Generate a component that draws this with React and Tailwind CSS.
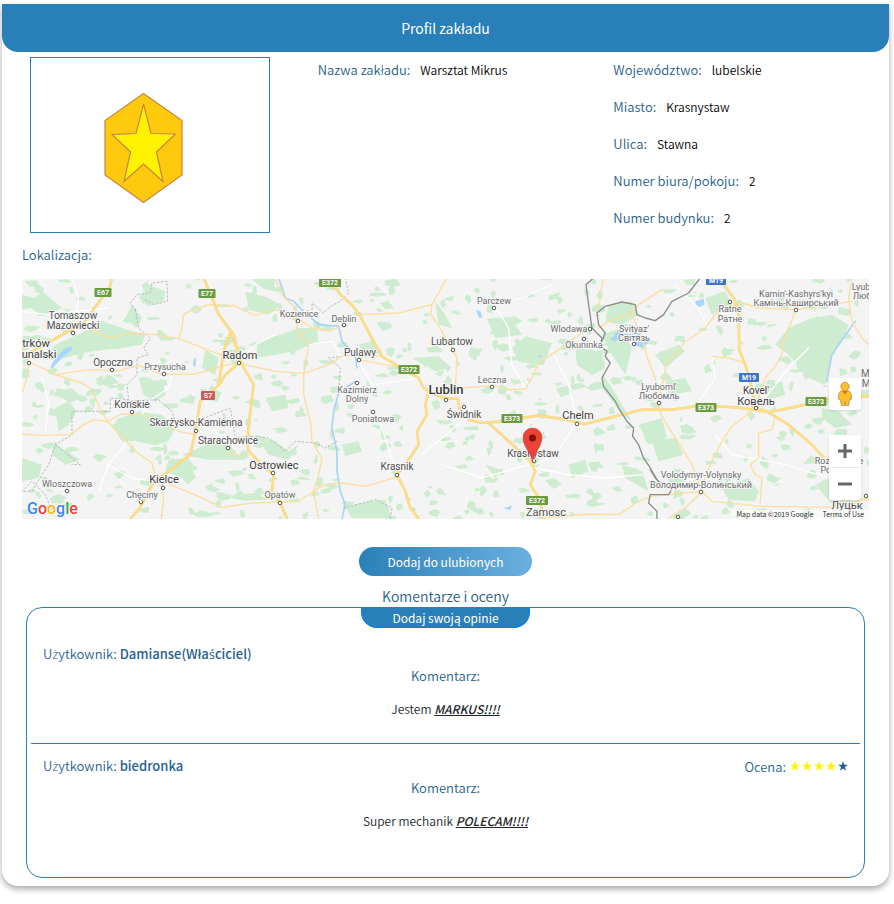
import React from "react";

/* Map geometry is drawn in units of a third of a pixel, see the scaled group in MapDrawing. */
const FORESTS = [
  "190,160 240,130 330,160 370,170 360,200 300,210 250,215 180,225 130,240 70,245 100,200",
  "270,440 310,415 350,402 420,410 460,450 440,490 400,502 340,490 300,490",
  "350,300 420,310 432,350 400,372 365,350",
  "530,510 600,480 640,520 655,545 560,545 480,530",
  "440,545 500,540 522,575 470,598 430,580",
  "0,50 40,60 60,40 120,90 70,115 30,90 0,95",
  "100,390 140,370 165,400 140,440 110,460",
  "95,490 130,520 175,545 130,560 90,530",
  "100,340 150,330 180,360 140,375",
  "380,20 430,40 425,70 380,85 350,60",
  "330,80 360,120 345,150 310,120",
  "0,540 60,560 50,600 0,610",
  "550,215 590,240 580,290 540,270",
  "710,190 790,165 830,150 885,150 890,190 820,220 760,230 700,240",
  "670,40 740,60 775,80 740,110 680,95",
  "690,3 760,3 755,40 720,30",
  "700,470 760,490 800,520 830,500 800,545 740,530",
  "730,360 790,350 800,390 750,400",
  "1010,200 1050,190 1080,220 1030,240",
  "630,650 700,645 740,665 660,668",
  "970,690 1040,670 1090,665 1110,720 990,720",
  "1240,70 1270,110 1290,150 1250,140",
  "1470,210 1510,175 1590,195 1565,262 1490,252",
  "1395,122 1465,117 1500,170 1420,180",
  "1660,210 1740,220 1750,270 1710,292 1665,260",
  "1740,285 1770,330 1800,380 1830,430 1800,410 1745,335",
  "1740,170 1800,150 1830,210 1810,290 1770,230",
  "1760,80 1830,70 1850,110 1800,140 1750,130",
  "1850,440 1920,420 1935,480 1880,500",
  "1800,560 1860,580 1880,640 1810,600",
  "2300,150 2370,120 2430,110 2480,140 2460,190 2430,230 2410,320 2360,300 2300,230 2260,200",
  "2220,330 2280,310 2290,350 2240,365",
  "1900,230 1970,200 1990,220 1930,270",
  "2050,60 2110,40 2130,80 2070,110",
  "1890,490 1960,480 1985,530 1910,550",
  "2100,630 2180,600 2210,640 2200,670 2120,665",
  "2400,390 2450,400 2490,440 2440,450 2400,420",
  "2440,590 2500,680 2440,690 2380,620",
  "1390,560 1440,575 1420,600",
  "1640,560 1690,545 1700,580 1650,600",
  "960,500 1010,490 1020,520 970,535",
  "2270,190 2320,170 2330,220 2280,215",
  "1930,310 1990,300 2010,340 1940,350",
  "1170,240 1250,235 1290,270 1240,280",
];

const THICK_ROADS = [
  "270,0 262,30 225,80 185,135 130,165 60,205 20,225 0,238",
  "545,0 570,60 590,110 635,170 650,230 655,250",
  "625,165 605,220 595,290 590,320 560,350 535,370 525,430 518,470 505,530 440,580 395,610 375,650 350,695 325,722",
  "657,250 610,290 590,320",
  "925,10 960,55 990,80 1015,115 1055,190 1080,235 1130,265 1190,300 1205,330 1240,350 1270,360",
  "630,170 650,230 660,260 695,320 685,400 675,490 680,520 730,570 755,590 750,640 775,675 795,722",
  "1220,340 1210,380 1215,410 1185,460 1190,500 1160,545 1125,590 1150,640 1165,690 1190,722",
  "1260,360 1308,362 1312,390 1340,425 1380,435 1440,430 1550,412 1630,425 1690,438 1740,425 1810,408 1860,395 1950,395 2020,385 2090,385 2140,388 2200,396 2240,402 2280,395 2350,380 2420,362 2541,355",
  "1400,435 1450,480 1525,550 1540,580 1525,620 1555,665 1562,722",
  "2190,385 2235,400 2300,440 2370,500 2420,555 2480,620",
  "2090,0 2135,60 2150,100 2152,215 2170,260 2185,310 2202,385",
];

const THIN_ROADS = [
  "200,155 260,178 340,165 400,170 470,182 600,232 650,240",
  "20,252 60,270 100,290 180,315 210,335 235,395 260,435 300,475 340,520 390,555 400,600",
  "100,290 200,275 290,278 350,262 420,290 520,288 600,265 655,250",
  "0,210 20,252 15,300 0,345",
  "0,468 60,472 145,470 185,440 215,425 255,430 300,408 370,412 430,435 470,460 520,470",
  "630,85 560,80 500,100 485,110 480,150 470,182",
  "420,620 425,660 418,722",
  "430,615 480,635 530,655 600,688 690,675 775,672 830,670 875,640 905,620 960,615 1030,625 1125,597",
  "617,505 625,530 680,533",
  "760,0 780,50 815,85 825,150 860,200 845,290 845,350 865,430 870,490 900,540 890,590 875,640 890,722",
  "630,80 700,112 760,95 810,110 870,150 920,160 950,148",
  "1015,110 1130,105 1230,80 1275,0",
  "1230,80 1227,110 1260,160 1285,205 1305,240 1300,330",
  "655,257 690,265 760,280 845,287 920,260 960,235 1020,230 1080,235",
  "1010,245 1130,268",
  "1240,350 1320,330 1380,325 1420,323 1460,335 1510,333 1535,290 1550,255 1610,215 1700,150",
  "1562,720 1700,708 1790,710 1850,670 1890,655 2040,640 2070,670 2220,685 2440,688 2541,660",
  "1745,0 1725,100",
  "1730,150 1760,130 1820,110 1850,80 1920,35",
  "1830,110 1860,180 1880,250 1900,300 1912,390",
  "2202,385 2230,300 2260,265 2280,230 2285,190 2320,100",
  "1910,375 1925,300 1935,250 1970,220 1985,195 2050,150 2080,110 2125,85 2160,75 2210,90 2320,95 2400,85 2490,70",
  "2490,0 2480,60 2490,130 2520,180 2541,200",
  "1910,395 1940,450 1980,510 2010,560 2040,640",
  "2190,400 2130,445 2100,490 2055,580 2040,635",
  "2260,415 2250,455 2210,465 2210,540 2185,560 2200,590 2220,600 2215,675",
  "2040,640 1990,690 1940,722",
  "2070,235 2120,240 2160,252",
  "2420,690 2480,660 2541,665",
];

const LOCAL_ROADS = [
  "150,0 170,60 160,110",
  "0,100 80,110 160,100 260,90",
  "60,300 80,370 70,460",
  "360,410 380,370 440,330 450,290",
  "255,560 330,600 400,610",
  "230,640 260,560 310,500",
  "655,250 700,200 760,170",
  "860,200 930,190 960,240",
  "1010,250 1050,320 1125,310 1190,300",
  "1053,400 1080,450 1125,590",
  "1200,530 1260,480 1320,430",
  "1417,80 1460,150 1470,260 1510,330",
  "1417,80 1500,60 1590,20",
  "1540,560 1600,530 1660,440",
  "1540,570 1640,590 1750,600 1860,590",
  "1260,560 1380,600 1520,560",
  "1590,220 1640,320 1665,435",
  "2070,235 2080,300 2020,385",
  "2080,470 2130,530 2290,560 2420,600",
  "1960,20 2030,90 2060,150",
  "2360,210 2300,270 2210,385",
];

const RIVERS = [
  "770,0 790,60 815,70 845,100 890,140 950,145 960,190 1000,230 1005,270",
  "1000,310 950,345 935,400 930,450 945,520 945,580 955,640 970,680 960,722",
  "2500,130 2450,200 2430,230 2420,280 2415,310",
];

const LAKES = [
  "85,268 100,240 130,210 152,205 150,215 125,235 92,270",
  "1362,95 1375,100 1382,120 1370,118",
  "1765,185 1790,155 1802,170 1780,190",
  "1830,200 1850,160 1865,180 1880,195 1860,208",
  "1790,170 1830,165 1855,180 1820,190",
  "2020,70 2045,62 2048,80 2025,90",
  "1445,690 1470,683 1465,697",
  "515,245 523,240 520,268 513,262",
  "1545,235 1562,230 1555,240",
  "660,575 675,567 668,578",
];

const COUNTRY_BORDERS = [
  "1715,0 1692,20 1700,80 1710,150 1740,180 1735,205 1755,220 1750,235 1765,255 1740,300 1745,325 1780,370 1790,390 1815,430 1835,450 1832,475 1850,500 1865,540 1885,570 1905,605 1920,620",
  "1740,190 1750,165 1730,140 1725,105 1750,85 1800,72 1840,80 1845,110 1870,120 1900,128 1925,110 1950,70 2000,45 2035,0",
  "1885,575 1900,600 1930,630 1955,625 1940,650 1885,650 1880,675 1905,700 1905,722",
];

const REGION_BORDERS = [
  "340,95 325,75 345,50 385,45 390,15 435,10 437,70 395,80 370,65",
  "340,95 350,150 385,180 365,210 380,230 345,240 345,290 315,320 320,365 265,360 265,400 150,400 150,470 100,500 80,560 60,590 30,640 0,640",
  "315,370 410,365 450,400 460,430 520,430 625,390 640,480",
  "640,480 700,475 740,480 790,520 820,490 880,495 910,510 945,490",
  "970,0 980,45 955,70 925,85 905,105 870,75 870,95",
  "960,235 920,240 955,270 950,330",
  "100,500 175,560 150,560",
  "965,690 1060,665 1110,690 1105,722",
  "0,640 30,610 70,650 90,700",
];

function scatter(count) {
  let seed = 41;
  const next = () => {
    seed = (seed * 16807) % 2147483647;
    return seed / 2147483647;
  };
  return Array.from({ length: count }, () => {
    const cx = next() * 2541;
    const cy = next() * 722;
    const rx = 7 + next() * 20;
    const ry = 5 + next() * 13;
    const corners = 4 + Math.floor(next() * 4);
    return Array.from({ length: corners }, (_, i) => {
      const a = (i / corners) * Math.PI * 2 + next() * 0.8;
      const r = 0.5 + next() * 0.7;
      return `${Math.round(cx + Math.cos(a) * rx * r)},${Math.round(cy + Math.sin(a) * ry * r)}`;
    }).join(" ");
  });
}

const GROVES = scatter(560);

/* [text, centre x, baseline y, size, tone] */
const LABELS = [
  ["Tomaszow", 51, 40, 10, "b"],
  ["Mazowiecki", 51, 50, 10, "b"],
  ["trków", 14, 68, 11, "a"],
  ["unalski", 17, 79, 11, "a"],
  ["Opoczno", 91, 87, 10, "b"],
  ["Przysucha", 143, 91, 9, "c"],
  ["Konskie", 110, 129, 10, "b"],
  ["Skarżysko-Kamienna", 174, 147, 10, "b"],
  ["Starachowice", 206, 165, 10, "b"],
  ["Kielce", 142, 204, 11, "a"],
  ["Chęciny", 120, 219, 9, "c"],
  ["Wloszczowa", 45, 208, 9, "c"],
  ["Radom", 218, 80, 11, "a"],
  ["Kozienice", 277, 38, 9, "c"],
  ["Deblin", 322, 43, 9, "c"],
  ["Pulawy", 338, 77, 10, "b"],
  ["Kazimierz", 335, 114, 9, "c"],
  ["Dolny", 335, 123, 9, "c"],
  ["Poniatowa", 351, 143, 9, "c"],
  ["Ostrowiec", 252, 190, 11, "a"],
  ["Opatów", 258, 219, 9, "c"],
  ["Krasnik", 375, 191, 10, "b"],
  ["Lubartow", 430, 66, 10, "b"],
  ["Lublin", 424, 115, 13, "a"],
  ["Świdnik", 442, 139, 10, "b"],
  ["Leczna", 470, 104, 9, "c"],
  ["Parczew", 472, 25, 9, "c"],
  ["Wlodawa", 547, 53, 9, "c"],
  ["Okuninka", 562, 69, 9, "c"],
  ["Svityaz'", 612, 53, 9, "c"],
  ["Світязь", 612, 62, 9, "c"],
  ["Chelm", 556, 140, 11, "a"],
  ["Krasnystaw", 511, 178, 10, "b"],
  ["Zamosc", 524, 237, 11, "b"],
  ["Lyuboml'", 637, 111, 9, "c"],
  ["Любомль", 637, 120, 9, "c"],
  ["Ratne", 708, 33, 9, "c"],
  ["Ратне", 708, 43, 9, "c"],
  ["Kamin'-Kashyrs'kyi", 774, 18, 9, "c"],
  ["Камінь-Каширський", 774, 27, 9, "c"],
  ["Lyub", 839, 11, 9, "c"],
  ["Люб", 840, 20, 9, "c"],
  ["Kovel'", 734, 115, 10, "a"],
  ["Ковель", 734, 126, 11, "a"],
  ["Ma", 846, 98, 10, "c"],
  ["M", 844, 108, 10, "c"],
  ["Volodymyr-Volynsky", 679, 199, 9, "c"],
  ["Володимир-Волинський", 679, 209, 9, "c"],
  ["Rozhyshche", 817, 185, 9, "c"],
  ["Рожище", 816, 194, 9, "c"],
  ["Луцьк", 825, 230, 11, "b"],
];

const TOWNS = [
  [51, 54], [7, 84], [90, 91], [142, 95], [110, 133], [174, 152], [206, 169], [141, 209],
  [119, 223], [45, 212], [217, 84], [276, 42], [322, 46], [337, 81], [335, 104], [351, 133],
  [251, 194], [258, 224], [375, 196], [431, 71], [424, 121], [442, 128], [470, 108], [472, 29],
  [568, 50], [562, 60], [612, 65], [555, 145], [512, 182], [637, 124], [708, 23], [774, 31],
  [734, 129], [679, 213], [844, 217], [656, 238],
];

const SHIELDS = [
  ["E67", 81, 13, 17, "#6a9b3f"],
  ["E77", 185, 14, 17, "#6a9b3f"],
  ["S7", 186, 116, 14, "#cd5c5c"],
  ["E372", 308, 3, 22, "#6a9b3f"],
  ["E372", 387, 90, 21, "#6a9b3f"],
  ["E373", 490, 139, 21, "#6a9b3f"],
  ["E372", 515, 221, 22, "#6a9b3f"],
  ["M19", 694, 1, 20, "#3f74c9"],
  ["M19", 727, 98, 20, "#3f74c9"],
  ["E373", 684, 128, 21, "#6a9b3f"],
  ["E373", 794, 122, 21, "#6a9b3f"],
];

const TONES = { a: "#3c3c3c", b: "#4f4f4f", c: "#6b6b6b" };

function Lines({ items, color, width, dash }) {
  return (
    <g fill="none" stroke={color} strokeWidth={width} strokeDasharray={dash} strokeLinejoin="round" strokeLinecap="round">
      {items.map((points, i) => (
        <polyline key={i} points={points} />
      ))}
    </g>
  );
}

function MapDrawing() {
  return (
    <svg
      className="block h-full w-full bg-[#f4f4f4] font-['Roboto',sans-serif]"
      viewBox="0 0 847 240"
      preserveAspectRatio="xMidYMid slice"
      role="img"
      aria-label="Mapa"
    >
      <g transform="translate(0 -1) scale(0.3333)">
        <g fill="#ceecd0">
          {FORESTS.map((p, i) => <polygon key={i} points={p} />)}
          {GROVES.map((p, i) => <polygon key={i} points={p} />)}
        </g>
        <g fill="#a9d6fb">
          {LAKES.map((p, i) => <polygon key={i} points={p} />)}
        </g>
        <Lines items={LOCAL_ROADS} color="#ffffff" width={4} />
        <Lines items={RIVERS} color="#a9d3f8" width={5} />
        <Lines items={REGION_BORDERS} color="#b9b9be" width={3} dash="5 7" />
        <Lines items={THIN_ROADS} color="#fbdf9d" width={4} />
        <Lines items={THICK_ROADS} color="#f9d27a" width={8} />
        <Lines items={THICK_ROADS} color="#fde08c" width={5} />
        <Lines items={COUNTRY_BORDERS} color="#8d8d8d" width={4} />
      </g>
      <g fill="#ffffff" stroke="#555555" strokeWidth="1">
        {TOWNS.map(([x, y], i) => <circle key={i} cx={x} cy={y} r="1.8" />)}
      </g>
      {SHIELDS.map(([text, x, y, w, fill], i) => (
        <g key={i}>
          <rect x={x - w / 2} y={y - 4} width={w} height="9" rx="1" fill={fill} />
          <text x={x} y={y + 3} textAnchor="middle" fontSize="7" fontWeight="700" fill="#ffffff">{text}</text>
        </g>
      ))}
      <g textAnchor="middle" stroke="#f7f7f7" strokeWidth="2" strokeLinejoin="round" paintOrder="stroke">
        {LABELS.map(([text, x, y, size, tone], i) => (
          <text key={i} x={x} y={y} fontSize={size} fontWeight={size > 12 ? 500 : 400} fill={TONES[tone]}>{text}</text>
        ))}
      </g>
      <path d="M510.500 183c-1-9-9.500-15-9.500-24.500a9.500 9.500 0 0 1 19 0c0 9.500-8.500 15.500-9.500 24.500z" fill="#ea4335" stroke="#c9372b" strokeWidth="0.500" />
      <circle cx="510.500" cy="159" r="3.500" fill="#7d120d" />
    </svg>
  );
}

function Pegman() {
  return (
    <svg viewBox="0 0 16 26" className="h-[26px] w-4" aria-hidden="true">
      <path d="M4 10C2.500 10.500 2 12 1.800 14L1.300 18l2.200.8.800 5.700h3l.7-4 .7 4h3l.8-5.700 2.200-.8-.5-4c-.2-2-.7-3.500-2.200-4z" fill="#fcbf2c" stroke="#b98a45" strokeWidth="0.800" />
      <path d="M5 9.800h6l-3 4z" fill="#e3742b" />
      <circle cx="8" cy="5.500" r="4.200" fill="#fcbf2c" stroke="#b98a45" strokeWidth="0.800" />
    </svg>
  );
}

function GoogleMark() {
  return (
    <span className="text-[16px] leading-5 font-medium font-['Roboto',sans-serif] [text-shadow:0_0_2px_#fff]">
      <span className="text-[#4285f4]">G</span>
      <span className="text-[#ea4335]">o</span>
      <span className="text-[#fbbc05]">o</span>
      <span className="text-[#4285f4]">g</span>
      <span className="text-[#34a853]">l</span>
      <span className="text-[#ea4335]">e</span>
    </span>
  );
}

function LocationMap() {
  return (
    <div className="relative h-60 overflow-hidden">
      <MapDrawing />
      <div className="absolute bottom-0 left-[5px]">
        <GoogleMark />
      </div>
      <div className="absolute right-2 bottom-[19px] flex flex-col gap-[25px]">
        <button type="button" aria-label="Street View" className="flex h-8 w-8 items-center justify-center rounded-xs bg-white shadow-sm">
          <Pegman />
        </button>
        <div className="flex flex-col items-center rounded-xs bg-white shadow-sm">
          <button type="button" aria-label="Powiększ" className="flex h-8 w-8 items-center justify-center">
            <svg viewBox="0 0 14 14" className="h-3.5 w-3.5" aria-hidden="true"><path d="M5.500 0h3v5.500H14v3H8.500V14h-3V8.500H0v-3h5.500z" fill="#666666" /></svg>
          </button>
          <div className="h-px w-7 bg-[#e6e6e6]" />
          <button type="button" aria-label="Pomniejsz" className="flex h-8 w-8 items-center justify-center">
            <svg viewBox="0 0 14 14" className="h-3.5 w-3.5" aria-hidden="true"><path d="M0 5.500h14v3H0z" fill="#666666" /></svg>
          </button>
        </div>
      </div>
      <div className="absolute right-0 bottom-0 flex gap-[9px] bg-white/60 pr-[5px] pl-1 text-[7px] leading-[9px] text-[#222]">
        <span>Map data ©2019 Google</span>
        <a href="#terms">Terms of Use</a>
      </div>
    </div>
  );
}

/* The CJK family has no ż and ś of its own, so these letters come from Open Sans. */
function Polish({ children }) {
  return children.split(/([żś])/).map((part, i) =>
    i % 2 ? <span key={i} className="font-['Open_Sans',sans-serif]">{part}</span> : part
  );
}

function Field({ label, value }) {
  return (
    <div className="flex h-[37px] items-start gap-[10px] leading-[25px]">
      <dt className="text-[13px] text-[#1f618d]">{label}</dt>
      <dd className="text-[12px] text-black">{value}</dd>
    </div>
  );
}

function Rating({ value }) {
  return (
    <span className="flex items-center gap-1">
      Ocena:
      <span className="flex gap-0.5" role="img" aria-label={`${value} / 5`}>
        {[1, 2, 3, 4, 5].map((n) => (
          <svg key={n} viewBox="0 0 10 10" className="h-2.5 w-2.5" aria-hidden="true">
            <path d="M5 0l1.200 3.700H10L6.950 6l1.150 3.700L5 7.450 1.900 9.700 3.050 6 0 3.700h3.800z" fill={n <= value ? "#fff200" : "#1f618d"} />
          </svg>
        ))}
      </span>
    </span>
  );
}

function Comment({ user, lead, shout, rating }) {
  return (
    <article className="h-[111px] px-3 pt-[11px]">
      <div className="flex justify-between text-[13px] leading-[21px] text-[#1f618d]">
        <span><Polish>Użytkownik:</Polish> <b className="font-medium"><Polish>{user}</Polish></b></span>
        {rating ? <Rating value={rating} /> : null}
      </div>
      <h3 className="text-center text-[13px] leading-[21px] text-[#1f618d]">Komentarz:</h3>
      <p className="mt-3 text-center text-[12px] leading-[21px] text-[#212529]">
        {lead} <b className="font-medium italic underline">{shout}</b>
      </p>
    </article>
  );
}

export default function App() {
  return (
    <div className="min-h-screen bg-white pt-1 pr-[5px] pb-4 pl-0.5 font-['Noto_Sans_CJK_SC','Noto_Sans',sans-serif] font-[350]">
      <main className="rounded-b-2xl bg-white pb-2 shadow-[0_3px_6px_rgba(0,0,0,0.35)]">
        <h1 className="rounded-b-2xl bg-[#2980b9] text-center text-[14px] leading-[48px] font-normal text-white">Profil zakładu</h1>

        <section className="grid grid-cols-3">
          <div className="pt-[5px] pl-7">
            <div className="h-44 w-60 border border-[#2980b9]">
              <svg viewBox="0 0 238 174" className="h-full w-full" role="img" aria-label="Logo zakładu">
                <g stroke="#c68642" strokeWidth="1.200">
                  <path d="M112.500 35.500L151 62.500v54.500L112.500 144.500 74 117V62.500z" fill="#ffc90e" />
                  <path d="M112.500 46l7.500 29.500 24.500.5-19 18 6.500 29.500-19.500-17.500L93 123.500 99.500 94 81 76.500l24-1z" fill="#fff200" />
                </g>
              </svg>
            </div>
          </div>
          <dl className="pt-[5px] pl-5">
            <Field label="Nazwa zakładu:" value="Warsztat Mikrus" />
          </dl>
          <dl className="pt-[5px] pl-5">
            <Field label="Województwo:" value="lubelskie" />
            <Field label="Miasto:" value="Krasnystaw" />
            <Field label="Ulica:" value="Stawna" />
            <Field label="Numer biura/pokoju:" value="2" />
            <Field label="Numer budynku:" value="2" />
          </dl>
        </section>

        <section className="px-5">
          <h2 className="pb-3 text-[13px] leading-[25px] font-[350] text-[#1f618d]">Lokalizacja:</h2>
          <LocationMap />
        </section>

        <div className="flex justify-center pt-7">
          <button type="button" className="h-[29px] rounded-full bg-linear-to-r from-[#2980b9] to-[#6ab0de] px-7 text-[12px] font-normal text-white">
            Dodaj do ulubionych
          </button>
        </div>

        <h2 className="pt-[10px] text-center text-[14px] leading-[21px] font-[350] text-[#1f618d]">Komentarze i oceny</h2>
        <section className="mx-6 h-[271px] rounded-2xl border border-[#2980b9] px-1">
          <div className="flex justify-center">
            <button type="button" className="h-5 rounded-b-2xl border border-t-0 border-[#007bff] bg-[#2980b9] px-[30px] text-[12px] leading-[18px] font-normal text-white">
              Dodaj swoją opinie
            </button>
          </div>
          <div className="pt-1">
            <Comment user="Damianse(Właściciel)" lead="Jestem" shout="MARKUS!!!!" />
            <hr className="border-[#2980b9]" />
            <Comment user="biedronka" lead="Super mechanik" shout="POLECAM!!!!" rating={4} />
          </div>
        </section>
      </main>
    </div>
  );
}
